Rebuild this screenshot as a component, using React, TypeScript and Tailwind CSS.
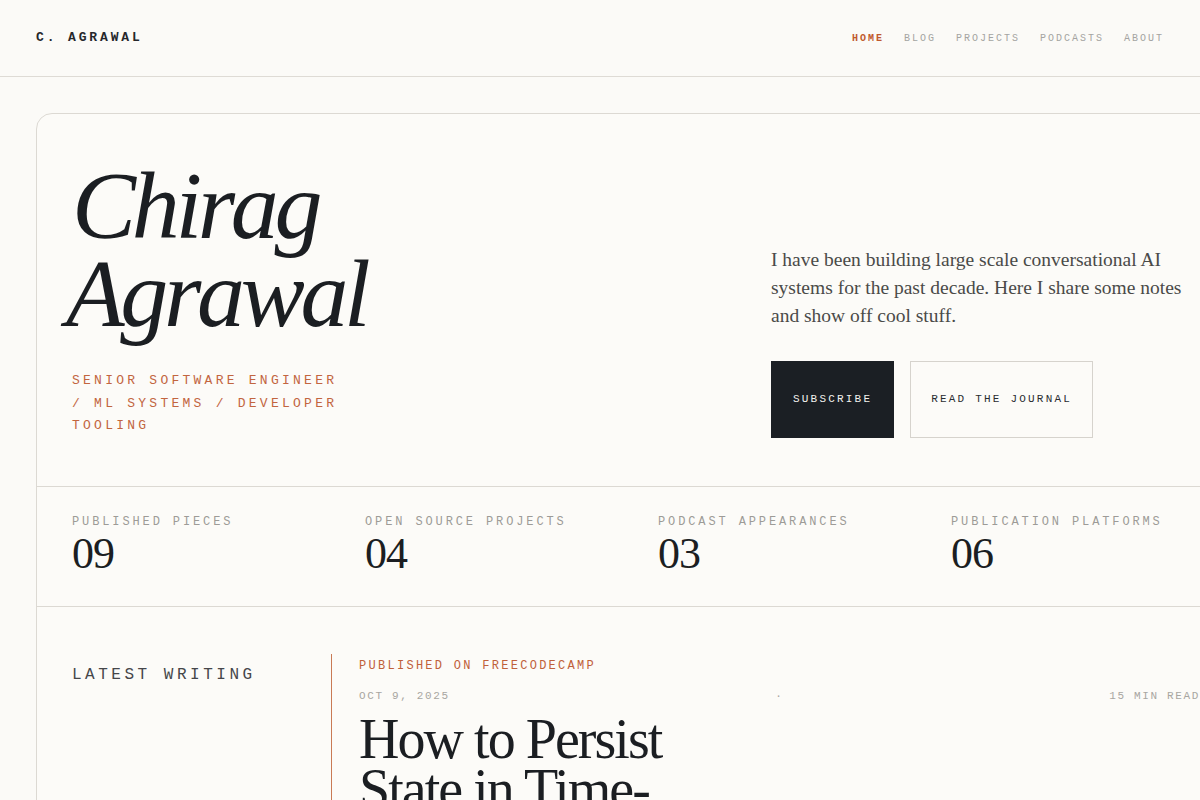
import React from "react";

const navItems = ["HOME", "BLOG", "PROJECTS", "PODCASTS", "ABOUT"];

const stats = [
  { label: "PUBLISHED PIECES", value: "09" },
  { label: "OPEN SOURCE PROJECTS", value: "04" },
  { label: "PODCAST APPEARANCES", value: "03" },
  { label: "PUBLICATION PLATFORMS", value: "06" },
];

function Header() {
  return (
    <header className="h-[77px] flex items-center justify-between px-9 border-b border-[#dedbd5]">
      <div className="font-['Liberation_Mono','DejaVu_Sans_Mono',monospace] text-[13px] tracking-[0.22em] text-[#25272b] font-semibold">
        C. AGRAWAL
      </div>
      <nav className="flex items-center gap-5 font-['Liberation_Mono','DejaVu_Sans_Mono',monospace] text-[10px] tracking-[0.2em]">
        {navItems.map((item, i) => (
          <a key={item} className={i === 0 ? "font-bold text-[#c0592d]" : "text-[#a4a4a1]"}>
            {item}
          </a>
        ))}
      </nav>
    </header>
  );
}

function Hero() {
  return (
    <section className="grid grid-cols-[699px_1fr] items-end px-[35px] pt-12 pb-12 border-b border-[#dcd9d3]">
      <div>
        <h1 className="font-['Liberation_Serif','DejaVu_Serif',serif] italic text-[96px] leading-[88px] tracking-[-0.045em] text-[#1b1e22]">
          Chirag
          <br />
          <span className="-ml-[6px]">Agrawal</span>
        </h1>
        <p className="mt-8 max-w-[272px] font-['Liberation_Mono','DejaVu_Sans_Mono',monospace] text-[13px] leading-[22.5px] tracking-[0.25em] text-[#c2653f]">
          SENIOR SOFTWARE ENGINEER / ML SYSTEMS / DEVELOPER TOOLING
        </p>
      </div>
      <div>
        <p className="max-w-[430px] font-['Liberation_Serif','DejaVu_Serif',serif] text-[19.5px] leading-[28px] text-[#4a4a48]">
          I have been building large scale conversational AI systems for the past decade. Here I
          share some notes and show off cool stuff.
        </p>
        <div className="mt-[31px] flex gap-4 font-['Liberation_Mono','DejaVu_Sans_Mono',monospace] text-[11px] tracking-[0.2em]">
          <button className="h-[77px] px-[22px] bg-[#1b1f24] text-[#f3f2ee]">SUBSCRIBE</button>
          <button className="h-[77px] px-[20px] border border-[#d6d3cd] text-[#2a2c30]">
            READ THE JOURNAL
          </button>
        </div>
      </div>
    </section>
  );
}

function Stats() {
  return (
    <section className="grid grid-cols-4 px-[35px] pt-[27px] pb-[30px] border-b border-[#dcd9d3]">
      {stats.map((s) => (
        <div key={s.label}>
          <div className="font-['Liberation_Mono','DejaVu_Sans_Mono',monospace] text-[12px] leading-4 tracking-[0.24em] text-[#9d9b97]">
            {s.label}
          </div>
          <div className="mt-[2px] font-['Liberation_Serif','DejaVu_Serif',serif] text-[44px] leading-[44px] tracking-[-0.02em] text-[#1b1e22]">
            {s.value}
          </div>
        </div>
      ))}
    </section>
  );
}

function LatestWriting() {
  return (
    <section className="grid grid-cols-[259px_1fr] px-[35px] pt-[47px] pb-10">
      <div className="pt-[9px] font-['Liberation_Mono','DejaVu_Sans_Mono',monospace] text-[16px] leading-6 tracking-[0.22em] text-[#45464a]">
        LATEST WRITING
      </div>
      <article className="border-l border-[#c97a55] pl-[27px] pt-[4px] max-w-[869px]">
        <div className="font-['Liberation_Mono','DejaVu_Sans_Mono',monospace] text-[12px] leading-4 tracking-[0.19em] text-[#c0603a]">
          PUBLISHED ON FREECODECAMP
        </div>
        <div className="mt-[14px] flex justify-between font-['Liberation_Mono','DejaVu_Sans_Mono',monospace] text-[11px] leading-4 tracking-[0.15em] text-[#a8a6a1]">
          <span>OCT 9, 2025</span>
          <span>·</span>
          <span>15 MIN READ</span>
        </div>
        <h2 className="mt-[10px] max-w-[380px] font-['Liberation_Serif','DejaVu_Serif',serif] text-[56px] leading-[50px] tracking-[-0.035em] text-[#1b1e22]">
          How to Persist State in Time-Travel Debugging
        </h2>
      </article>
    </section>
  );
}

export default function App() {
  return (
    <div className="w-[1200px] h-[800px] overflow-hidden bg-[#fbfaf7]">
      <Header />
      <main className="pt-9 pl-9">
        <div className="w-[1244px] rounded-tl-2xl border border-[#dcd9d3] bg-[#fcfbf8]">
          <Hero />
          <Stats />
          <LatestWriting />
        </div>
      </main>
    </div>
  );
}
